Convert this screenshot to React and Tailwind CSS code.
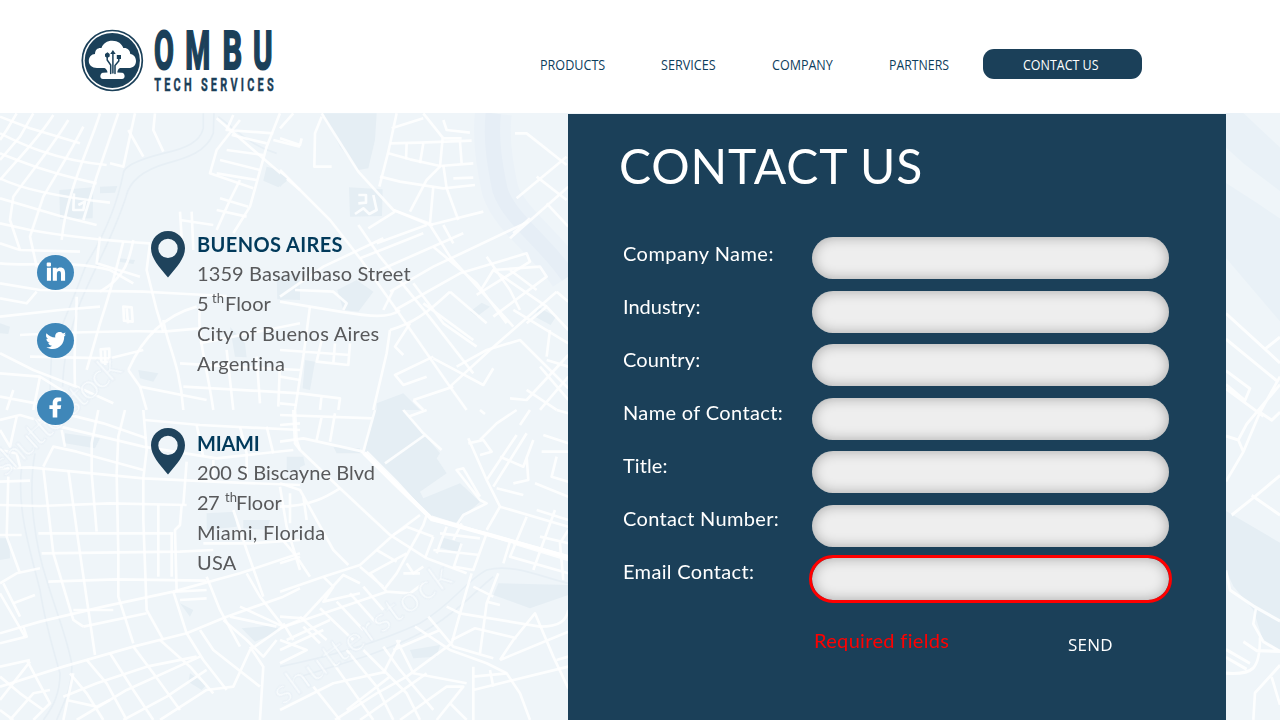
import React from "react";

const nav = [
  { label: "PRODUCTS", box: "w-[121px]", squeeze: "scale-x-[0.9]" },
  { label: "SERVICES", box: "w-[111px]", squeeze: "scale-x-[0.9]" },
  { label: "COMPANY", box: "w-[117px]", squeeze: "scale-x-[0.895]" },
  { label: "PARTNERS", box: "w-[94px]", squeeze: "scale-x-[0.88]" },
];

const fields = [
  { label: "Company Name:", tracking: "tracking-[0.46px]" },
  { label: "Industry:", tracking: "tracking-[0px]" },
  { label: "Country:", tracking: "tracking-[0.1px]" },
  { label: "Name of Contact:", tracking: "tracking-[0.36px]" },
  { label: "Title:", tracking: "tracking-[0.1px]" },
  { label: "Contact Number:", tracking: "tracking-[0.33px]" },
  { label: "Email Contact:", tracking: "tracking-[0.33px]", invalid: true },
];

// Each map tile is drawn on its own grid, three units to one pixel.
const tiles = [
  {
    at: "translate(0 110) scale(.3333)",
    blocks: [
      "M178,240 L280,232 L278,325 L180,328 Z",
      "M300,230 L352,228 L345,248 L300,250 Z",
      "M800,170 L830,178 L862,212 L835,232 L790,212 Z",
      "M358,445 L405,450 L400,462 L358,455 Z",
      "M830,500 L900,490 L900,570 L832,568 Z",
      "M415,780 L475,790 L460,815 L420,805 Z",
      "M0,640 L30,650 L25,672 L0,670 Z",
      "M690,650 L705,740 L740,742 L735,700 L690,650 Z",
    ],
    rail: [
      "M610,10 L610,55 C600,95 560,115 490,130 C430,145 372,165 370,190 C350,290 310,380 260,460 C230,540 190,640 155,720 L150,840",
      "M642,10 L640,70 C620,125 560,145 500,160 C430,180 388,215 378,260 C340,380 280,480 240,580 C210,660 190,740 188,830",
      "M655,20 C720,70 760,110 830,130",
    ],
    roads: [
      "M0,70 C60,100 160,150 320,165", "M0,130 C90,165 150,190 290,220", "M0,205 C60,235 170,260 330,278", "M0,265 L180,318 L290,345", "M0,340 L90,360 C200,380 320,392 450,400",
      "M50,10 L20,60 L0,90", "M100,10 L60,80 L0,150", "M160,15 C120,80 60,140 0,210", "M205,30 C150,120 90,190 40,260 L30,330 L60,420", "M250,50 C210,130 170,190 130,260 L90,380 L110,470",
      "M300,10 C270,110 200,240 185,390", "M355,10 L290,200 L250,330", "M405,10 L370,170 L330,160", "M385,60 L430,140", "M465,10 L460,60 L490,125", "M0,20 L90,55 L240,100",
      "M0,400 L60,420 L240,425 M0,460 C90,470 220,450 330,480 L400,520", "M0,520 L120,540 L430,545 L560,552 L680,558",
      "M650,25 L900,240", "M840,10 L800,110 L750,290 L700,370", "M720,30 L650,120 L630,190 L760,235", "M695,75 L800,100 M680,120 L790,135 M660,150 L780,180 M650,190 L770,210",
      "M700,15 L680,60 L820,70 M820,90 L900,110", "M720,210 L690,270 L650,360 M660,265 L745,290 M650,300 L740,320 M690,270 L672,310", "M540,305 L548,430 M575,305 L580,420 M540,330 L640,345",
      "M450,400 L440,480 L470,600 M370,395 C350,470 340,520 300,640 L260,780", "M300,380 L290,460 L420,500", "M400,390 C390,440 380,500 300,545", "M230,560 C230,640 220,700 225,830",
      "M60,675 C180,670 340,660 490,665 L600,655", "M0,620 L180,600 L300,590", "M90,740 L330,745 L430,720", "M0,790 L120,800 L200,850", "M0,730 L100,780 L230,830 L340,880",
      "M385,780 C420,700 480,620 590,590 M490,630 C500,700 540,760 550,900 M385,780 L420,830 L620,870", "M600,590 C590,680 620,760 640,900 M680,720 L700,900", "M420,830 L440,900 M470,600 L490,665",
      "M550,830 L900,850 M540,760 L700,770 L900,780", "M0,860 L160,890 M40,840 L20,900 M120,800 L100,900",
      "M770,740 L780,880 M840,760 L835,890", "M600,700 L900,640", "M0,565 L80,580 L110,545",
      "M370,590 L395,592 L398,635 L372,632 Z M380,595 L384,640 M302,718 L328,716 L328,755 L304,757 Z M315,716 L316,765 M222,250 L220,300 L250,300 L255,275 L235,285",
    ],
  },
  {
    at: "translate(280 110) scale(.3333)",
    blocks: [
      "M130,10 L290,10 L285,90 L265,175 L235,180 L180,110 Z",
      "M207,232 L308,238 L306,318 L210,320 Z",
      "M0,190 L22,205 L0,232 Z",
      "M172,540 L230,510 L280,545 L235,605 L190,600 Z",
      "M75,750 L105,755 L90,840 L68,835 Z",
      "M570,605 L605,578 L630,590 L590,620 Z",
      "M775,592 L828,620 L812,645 L765,620 Z",
      "M0,520 L45,520 L45,560 L0,570 Z",
      "M290,880 L370,850 L420,900 L290,900 Z",
    ],
    river: ["M640,10 C630,100 650,190 660,240 C690,330 800,400 865,500"],
    roads: [
      "M125,10 L175,90 L235,185 L340,300 L460,345", "M125,20 L105,70 L103,170 L155,170", "M0,85 L60,105 L65,85", "M0,55 L40,10",
      "M350,10 L325,125 L298,230 M335,55 L430,25", "M330,100 L420,98 L575,92 M325,130 L390,148 L480,168 L580,160 M300,200 L360,215 L490,235 L585,225",
      "M430,10 L490,85 L545,85 M490,30 L500,60 L570,68 M380,100 L378,148 M430,100 L420,160 M488,85 L480,170 L440,210 L390,305 M540,95 L545,160 M490,165 L500,235 L535,330 M460,230 L450,340 M520,205 L580,203",
      "M0,180 L150,330 L240,445 L350,600 L510,830 L560,900", "M235,345 L300,440 L440,610 L580,790", "M340,300 L450,345 L610,305", "M265,355 L345,305 M290,400 L440,345 M0,560 L130,470 L310,385 M240,445 L430,370 M300,480 L550,370",
      "M450,345 L510,440 L700,650 M490,345 L520,400 M460,410 L590,520 L680,640", "M330,545 L460,470 L745,335 M345,600 L540,490 L740,430 L750,455 L590,555", "M340,540 L310,600 M400,520 L490,640 L590,710 M430,580 L580,690 M510,545 L620,640",
      "M0,575 L90,590 L180,605 C270,620 330,625 360,600 M45,540 L160,545 L200,580 L190,600", "M705,70 L740,70 L860,165 M860,140 L710,265 M770,200 L860,270 M750,325 L700,370 M690,385 L865,230 M800,280 L865,350",
      "M600,545 L640,480 L800,590 M640,480 L780,470 L800,500 L640,620 M690,480 L770,540 M620,440 L690,540 L720,600", "M510,830 L630,720 L830,545 M830,545 L865,575 M700,600 L865,700 M740,640 L800,590 L865,660",
      "M330,660 C400,640 440,610 510,545 M330,660 L320,730 L280,900 M390,640 L345,710 L370,735 M460,740 L345,795 L370,825 L440,800 M460,745 L610,825 L640,775 M530,770 L620,720 L720,690 L865,835",
      "M90,590 L70,740 L45,900 M0,720 L210,735 M125,690 L110,755 L205,765 L210,700 M165,700 L160,760 M60,850 L180,865 L175,900 M125,855 L120,900",
      "M865,735 L740,870 L690,865 M780,770 L865,870 M740,840 L830,900 M865,800 L780,900 M800,740 L810,660 M865,770 L800,750", "M400,870 L520,830 M430,900 L400,870", "M0,880 L50,885 M0,800 L60,810",
      "M235,255 L258,255 L258,278 L235,280 M225,312 L250,295 L268,312 L290,300 L280,255",
    ],
  },
  {
    at: "translate(0 410) scale(.3333)",
    blocks: ["M195,70 L300,85 L285,115 L195,100 Z", "M0,385 L28,385 L30,445 L0,450 Z", "M620,310 L705,305 L710,350 L620,360 Z", "M730,330 L810,330 L800,360 L730,355 Z", "M725,655 L830,645 L835,665 L765,695 Z", "M570,790 L620,825 L605,840 L565,815 Z", "M540,580 L580,600 L570,620 Z", "M870,150 L900,140 L900,185 L870,185 Z"],
    rail: ["M65,170 C50,300 90,420 120,540 C135,640 160,720 180,790 C180,850 160,890 130,930", "M105,130 C80,260 110,420 140,510 C170,610 200,680 215,760 C220,830 190,880 170,930"],
    roads: [
      "M0,175 L90,172 L430,205 L640,215 L900,225", "M0,215 L90,212 M0,285 L120,288 L330,280 L560,285", "M0,375 L65,375 M115,370 L520,370 M125,430 L540,425 L640,420", "M145,515 L350,508 L620,512",
      "M130,175 L160,430 L220,630 L250,650 M205,180 L240,430 L285,735 M275,190 L290,365 M350,190 L355,430 L355,560 L400,700", "M430,205 L430,330 L440,600 L490,690 M475,285 L475,500 M515,370 L515,500 M545,285 L540,345 L525,360 L530,540",
      "M430,0 L440,120 L430,205 M375,0 L355,80 L350,190 M295,0 L275,100 L275,190 M185,60 L195,110", "M0,30 L60,15 L180,50 L430,110 L650,145 L880,120", "M180,30 L190,10 L310,40 L440,85 M435,30 L600,45 L900,60", "M130,170 L160,110 L230,125 L430,180",
      "M0,670 L120,635 L310,590 L520,545 L720,490 L900,430", "M0,700 L80,680 L70,650 M0,520 L50,490 L120,475 M40,580 L105,555 M60,490 L20,380 L25,200", "M0,550 L75,680 M10,520 L60,620",
      "M0,830 L190,770 L400,710 L560,670 L680,620 L850,560 L900,535", "M250,650 L440,610 M220,600 L340,600 M520,545 L560,670 L610,750 L680,840 M620,500 L660,600 L720,710 M740,490 L780,560 L850,650", "M525,545 L620,540 M540,570 L620,565",
      "M190,860 L290,820 L440,770 L590,740 M230,930 L380,840 L600,740 M370,930 L500,860 L620,780 M210,790 L260,850 L310,930 M260,750 L320,820 L380,930 M330,730 L400,840 L460,930 M400,710 L460,790 L540,900 M480,690 L570,770 L640,850",
      "M480,930 L620,840 L700,830 L750,720 L850,650 L900,630 M600,660 L640,720 L780,830 M670,630 L740,690 L790,740 L830,690 M750,710 L790,770 L780,930 M690,620 L830,650 M720,590 L850,650",
      "M0,870 L90,755 M0,800 L60,850 L130,900 M30,930 L100,850 L150,840 M0,900 L40,930 M80,750 L150,880 L100,930 M0,770 L90,750", "M220,790 L190,930 M200,870 L290,890 L330,870",
      "M560,155 L550,285 M640,150 L640,215 M590,45 L610,140 M720,50 L740,130 L740,210 M800,50 L820,130 M880,0 L885,100 L900,120", "M610,400 L750,400 L900,390 M700,300 L740,420 L790,560 M840,230 L860,350 L900,480", "M0,120 L50,130 L60,170 M0,60 L30,110 L50,20",
    ],
  },
  {
    at: "translate(280 410) scale(.3333)",
    blocks: ["M280,0 L365,0 L430,70 L480,130 L470,145 L500,190 L420,245 L430,265 L540,220 L600,275 L550,320 L540,340 L450,320 L255,125 Z", "M485,382 L548,400 L540,430 L478,412 Z", "M655,520 L865,525 L865,555 L750,595 L640,555 Z", "M160,110 L240,115 L240,130 L170,130 Z", "M390,720 L480,705 L470,740 L400,745 Z", "M20,140 L70,140 L75,165 L20,190 Z"],
    rail: ["M0,770 C150,740 290,700 420,640 C520,580 560,510 620,480 C700,460 780,500 865,520", "M60,800 C190,760 310,730 440,660 C540,600 590,540 640,500"],
    roads: [
      "M45,0 L50,90 L60,120 L180,235 L330,375 L440,445 L560,490", "M260,125 L350,215 L455,330 L620,370 L865,440", "M245,125 L345,225 L440,315 L430,345 L350,490 L315,535", "M285,0 L250,125 L70,85 L0,95 M110,90 L125,20 M150,95 L165,10 M0,45 L60,40 M0,15 L280,25",
      "M315,160 L435,75 M370,0 L430,70 L485,120 M385,20 L440,0", "M0,545 L130,500 L240,465 L340,375 L420,315", "M0,290 C90,290 140,260 180,235 M0,220 L60,240 L160,420 L205,465 M0,380 L50,440 L90,500 M0,460 L60,440 M30,250 L30,340 M70,260 L80,330",
      "M0,655 L320,545 L390,550 L430,520 M0,620 L70,625 L190,495 L240,520 M130,500 L160,530 L130,575 L240,550 M240,470 L310,530 M290,420 L350,455 M340,375 L380,350 L460,380 M370,490 L420,490 M320,545 L270,490 L380,430",
      "M380,460 L400,490 L430,470 M460,380 L435,445 M500,350 L470,430 M545,340 L520,390 M480,370 L600,385 M460,420 L600,435 M545,400 L520,475 M620,370 L580,480 L520,470 M455,320 L690,395",
      "M530,345 L550,315 L620,280 L600,270 L530,180 L550,175 L600,260", "M565,85 L620,210 L660,290 L620,360 M565,100 L610,90 L635,125 L600,135 M600,90 L650,40 L710,0 M720,45 L750,0 M620,210 L710,75 M640,230 L740,70 M650,235 L730,255 M660,140 L730,170 L760,90 M740,140 L745,210 L700,220 M790,75 L865,100 M785,125 L865,125 M830,140 L815,200 L865,215 M765,220 L865,260",
      "M660,290 L865,350 M690,395 L670,460 M700,400 L865,450 M770,300 L865,330 M825,300 L760,480 M865,360 L840,400 L850,510 M740,320 L690,440 L865,490 M780,380 L865,400",
      "M575,490 L560,540 L515,700 M655,490 L620,580 L600,730 M580,530 L640,560 M620,575 L660,585 M500,590 L540,610 L780,650 C840,650 860,630 865,600", "M660,750 L700,690 L765,610 L820,740 L865,835 M515,690 L585,655 L710,685 M660,750 L865,665 M830,750 L865,740",
      "M405,650 L510,720 L620,760 L680,790 L720,850 L750,930 M445,620 L520,710 L640,745 M515,700 L380,800 L290,850 L165,930 M360,690 L310,790 M350,690 L400,790 L560,820 M310,710 L360,780 L460,900 M480,660 L340,720",
      "M580,770 L580,930 M580,800 L680,790 M580,840 L865,770 M630,780 L640,830", "M0,900 L160,820 L320,785 M100,830 L180,930 M160,760 L280,930 M200,720 L290,830 L340,930 M250,720 L380,850 L420,930 M200,900 L330,800 M240,930 L440,790 M360,930 L500,830 L550,830 L470,930 M510,880 L560,930",
      "M0,690 L80,720 L0,760 M10,640 L40,690 M20,690 L150,630 M70,650 L120,700 M60,620 L140,690 M120,595 L220,690 M170,575 L250,660 M210,550 L290,640 M250,530 L310,600 M0,720 L130,660",
      "M865,10 L830,0 M600,0 L615,12",
    ],
  },
  {
    at: "translate(1180 100) scale(.3333 .3953)",
    blocks: ["M138,1040 L300,1120 L300,1390 L250,1370 L220,1290 L160,1230 L138,1190 Z"],
    haze: ["M138,33 L190,33 L300,120 L300,230 L190,160 L138,120 Z", "M138,210 L230,260 L300,300 L300,560 L138,400 Z"],
    roads: ["M138,540 L300,665 M138,605 L290,710 M255,630 L300,600 M138,685 L210,730 L195,760 L138,720 M138,730 L250,800 M300,700 L240,790 L190,890 L138,965 M300,720 L200,820 L175,860 L138,850 M240,790 L275,810 L300,790 M175,860 L190,890", "M155,1050 L225,1003 L300,950 M215,1000 L300,1050", "M138,1190 L150,1240 L220,1280 L300,1318 M228,1285 L220,1325 L250,1370 L300,1395 L230,1393 L190,1370 M240,1360 C240,1440 220,1455 138,1450 M138,1410 L200,1440 M138,1390 L210,1425 M300,1430 L225,1500 L220,1568 M275,1460 L300,1530"],
  },
];

function CityMap() {
  return (
    <svg className="absolute inset-0 h-[720px] w-[1280px]" viewBox="0 0 1280 720" fill="none" aria-hidden="true">
      {tiles.map((t) => (
        <g key={t.at} transform={t.at} strokeLinejoin="round">
          {t.blocks.map((d) => <path key={d} d={d} fill="#e5eef4" />)}
          {(t.haze || []).map((d) => <path key={d} d={d} fill="#e9f1f7" />)}
          {(t.river || []).map((d) => (
            <g key={d}>
              <path d={d} stroke="#ebf2f8" strokeWidth="110" />
              <path d={d} stroke="#e6eef6" strokeWidth="46" />
            </g>
          ))}
          {(t.rail || []).map((d) => <path key={d} d={d} stroke="#e7eff5" strokeWidth="5" />)}
          {t.roads.map((d) => <path key={d} d={d} stroke="#ffffff" strokeWidth="8" opacity=".85" />)}
        </g>
      ))}
      <path d="M364,453 L432,519 L568,557" stroke="#fff" strokeWidth="4" />
      <g fontFamily="Lato, sans-serif" fontSize="35" stroke="#e6eef5" strokeWidth="1" fill="#fbfdfe" opacity=".75">
        <text transform="translate(283 706) rotate(-36)" textLength="212">shutterstock</text>
        <text transform="translate(5 478) rotate(-42)" textLength="160">shutterstock</text>
      </g>
    </svg>
  );
}

function Logo() {
  const word = [
    ["O", 153.9, 0.535], ["M", 185.3, 0.53], ["B", 222.6, 0.57], ["U", 253, 0.55],
  ];
  return (
    <svg className="block h-[80px] w-[210px]" viewBox="75 20 210 80" role="img" aria-label="Ombu Tech Services">
      <circle cx="112.3" cy="60.5" r="30" fill="#fff" stroke="#1b4059" strokeWidth="1.7" />
      <circle cx="112.3" cy="60.5" r="27.6" fill="#1b4059" />
      <path d="M97,68 C92,68 88.800,65 88.800,61 C88.800,57 91.500,54.200 95,54 C95,49.500 98,47.500 101.500,48 C103,43.500 107,40.800 112.300,40.800 C118,40.800 122,44 123.300,48 C127.500,47.600 130,50 130.300,54 C133.800,54.600 136,57.200 136,61 C136,65.500 133,68 128.500,68 L120,68 C118,69 117.500,70.500 117.300,72.500 L122,72.700 C125,73 126,78.800 122,79 L103,79 C99,78.800 100,73 103,72.700 L107.500,72.500 C107.300,70.500 106.500,69 104.500,68 Z" fill="#fff" />
      <g stroke="#1b4059" strokeWidth="1.5" fill="none" strokeLinecap="round">
        <path d="M107.200,56 V60 L110.700,65 V73.500 M112.900,54 V73 M118.800,57 V61 L115,65.500 V73.500" />
      </g>
      <path d="M105,54 L107.500,52.200 L109.700,54 V56.500 L107.300,58 L105,56.500 Z M116.800,55 H121 V59 H116.800 Z M112.900,50 L115.700,54 H110.200 Z" fill="#1b4059" />
      <g fill="#1b4059" stroke="#1b4059" fontFamily="Roboto, sans-serif" fontWeight="700">
        {word.map(([letter, x, sx]) => (
          <text key={letter} transform={`translate(${x} 68.800) scale(${sx} 1)`} fontSize="54" strokeWidth="2">{letter}</text>
        ))}
        <text transform="translate(154.200 90.600) scale(.58 1)" fontSize="18.800" strokeWidth=".4" textLength="206" lengthAdjust="spacing">TECH SERVICES</text>
      </g>
    </svg>
  );
}

function Pin() {
  return (
    <svg className="block h-[47px] w-[34px] shrink-0" viewBox="0 0 34 47" aria-hidden="true">
      <path fillRule="evenodd" fill="#1f435c" d="M17 0C7.500 0 0 7.500 0 17.300C0 27.500 8.500 36.500 17 46.500C25.500 36.500 34 27.500 34 17.300C34 7.500 26.500 0 17 0ZM17 7.700A9.700 9.700 0 1 1 17 27.100A9.700 9.700 0 1 1 17 7.700Z" />
    </svg>
  );
}

const glyphs = {
  LinkedIn: "M9.700 8.500Q9.700 7.500 10.700 7.500H13Q14 7.500 14 8.500V10.600Q14 11.600 13 11.600H10.700Q9.700 11.600 9.700 10.600ZM9.900 12.700H14V25.700H9.900ZM15.800 12.700H19.700V14.300C20.600 13 21.700 12.400 23.400 12.400C26.700 12.400 28.100 14.500 28.100 18.100V25.700H24V19C24 17.100 23.500 16.100 22.100 16.100C20.600 16.100 19.900 17.200 19.900 19.100V25.700H15.800Z",
  Twitter: "M9.500 10.200C11.700 12.900 14.700 14.300 18.300 14.500C17.700 11.200 19.800 9 22.600 9C23.900 9 25 9.500 25.900 10.400L28.500 9.400L27.400 11.900L29 11.500L27.200 13.600C27.400 20.500 22.600 26.100 15.800 26.100C13.300 26.100 11.300 25.500 9.400 24.300C11.600 24.500 13.500 23.900 15 22.700C13.200 22.600 11.800 21.500 11.200 19.900H12.800C10.600 19.300 9.400 17.700 9.400 15.700L11 16.100C9 14.500 8.500 12.300 9.500 10.200Z",
  Facebook: "M15.700 27.400V19.100H12.400V15.300H15.700V13.100C15.700 9.500 17.700 7.500 21.100 7.500H24.200V11.200H22.300C20.700 11.200 20.300 11.900 20.300 13.200V15.300H24.200L23.600 19.100H20.300V27.400Z",
};

function Social({ name }) {
  return (
    <a aria-label={name} className="flex h-[35px] w-[37px] items-center justify-center rounded-[50%] bg-[#3f87b9]">
      <svg className="h-[35px] w-[37px]" viewBox="0 0 37 35"><path d={glyphs[name]} fill="#fff" /></svg>
    </a>
  );
}

export default function App() {
  return (
    <div className="relative flex h-[720px] w-[1280px] flex-col overflow-hidden bg-[#eff5f9] font-[Lato,sans-serif]">
      <CityMap />
      <header className="relative flex h-[113px] shrink-0 items-start bg-white pl-[75px] pt-5">
        <Logo />
        <nav className="ml-[255px] mt-[29px] flex h-[30px] items-center font-['Open_Sans',sans-serif] text-[14px] font-medium text-[#0d3d5c]">
          {nav.map((item) => (
            <a key={item.label} className={`${item.box} whitespace-nowrap pt-px`}>
              <span className={`inline-block origin-left ${item.squeeze}`}>{item.label}</span>
            </a>
          ))}
          <a className="flex h-[30px] w-[159px] items-center rounded-[11px] bg-[#1b4059] pl-10 pt-px whitespace-nowrap text-white">
            <span className="inline-block origin-left scale-x-[0.89]">CONTACT US</span>
          </a>
        </nav>
      </header>

      <main className="relative flex min-h-0 grow">
        <aside className="flex w-[151px] shrink-0 flex-col gap-[32.5px] pl-[37px] pt-[142px]">
          <Social name="LinkedIn" />
          <Social name="Twitter" />
          <Social name="Facebook" />
        </aside>

        <section className="flex w-[417px] shrink-0 flex-col gap-[49px] pt-[116px] text-[20px] leading-[30px] whitespace-nowrap text-[#58595b]">
          <div className="flex gap-3">
            <div className="pt-0.5"><Pin /></div>
            <address className="not-italic">
              <h2 className="h-[29px] font-bold tracking-[0.38px] text-[#023a5b]">BUENOS AIRES</h2>
              <p className="tracking-[0.1px]">1359 Basavilbaso Street</p>
              <p className="flex"><span className="w-[15px]">5</span><span className="-mt-[5px] w-[13px] text-[13px]">th</span><span>Floor</span></p>
              <p className="tracking-[0.24px]">City of Buenos Aires</p>
              <p className="tracking-[0.3px]">Argentina</p>
            </address>
          </div>
          <div className="flex gap-3">
            <div className="pt-px"><Pin /></div>
            <address className="not-italic pt-px">
              <h2 className="h-[29px] font-bold tracking-[-0.2px] text-[#023a5b]">MIAMI</h2>
              <p className="tracking-[0.05px]">200 S Biscayne Blvd</p>
              <p className="flex"><span className="w-7 tracking-[-0.7px]">27</span><span className="-mt-[5px] w-[11px] text-[13px]">th</span><span>Floor</span></p>
              <p className="tracking-[0.28px]">Miami, Florida</p>
              <p className="tracking-[0.2px]">USA</p>
            </address>
          </div>
        </section>

        <section className="mt-px flex w-[658px] shrink-0 flex-col bg-[#1b4059] pl-[55px] text-white">
          <h1 className="-ml-[4px] mt-[22px] h-[60px] text-[48px] leading-[60px] tracking-[0.85px] whitespace-nowrap">CONTACT US</h1>
          <form className="mt-[31px] flex">
            <div className="flex w-[189px] flex-col text-[20px] leading-[53px] whitespace-nowrap">
              {fields.map((f) => <label key={f.label} className={`h-[53px] ${f.tracking}`}>{f.label}</label>)}
            </div>
            <div className="mt-[10px] flex flex-col gap-[11.5px]">
              {fields.map((f) => (
                <input
                  key={f.label}
                  aria-label={f.label}
                  className={`h-[42px] w-[357px] rounded-full bg-[#eeeeee] shadow-[inset_0_0_13px_rgba(0,0,0,0.3)] outline-[3px] ${f.invalid ? "outline-[#ff0000] outline-solid" : "outline-none"}`}
                />
              ))}
            </div>
          </form>
          <div className="mt-[25px] flex items-start pl-[191px] whitespace-nowrap">
            <p className="w-[254px] text-[20px] leading-[30px] tracking-[0.33px] text-[#ff0000]">Required fields</p>
            <button type="button" className="mt-[5px] font-['Open_Sans',sans-serif] text-[17px] leading-[30px] tracking-[0.2px]">SEND</button>
          </div>
        </section>
      </main>
    </div>
  );
}
